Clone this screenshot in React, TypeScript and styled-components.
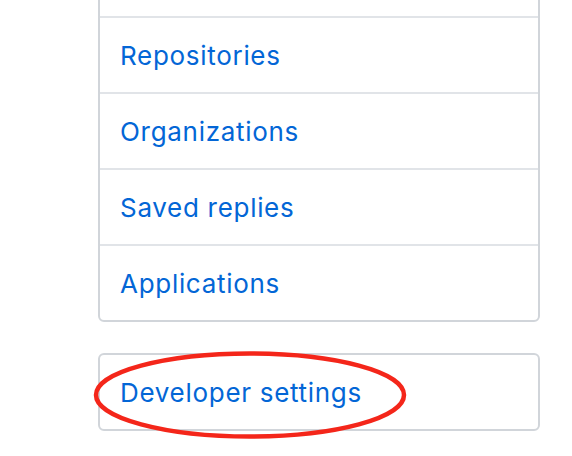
import React from "react";
import styled, { createGlobalStyle } from "styled-components";

const Global = createGlobalStyle`
  html, body { margin: 0; padding: 0; background: #ffffff; }
  body { font-family: Inter, "Liberation Sans", sans-serif; overflow: hidden; }
`;

const Page = styled.div`
  width: 572px;
  height: 456px;
  overflow: hidden;
  padding-left: 98px;
  box-sizing: border-box;
`;

const Panel = styled.nav<{ $offset?: number }>`
  position: relative;
  width: 442px;
  box-sizing: border-box;
  border: 2px solid #d1d5da;
  border-radius: 6px;
  margin-top: ${(p) => p.$offset ?? 0}px;
  display: flex;
  flex-direction: column;
`;

const Row = styled.a`
  display: flex;
  align-items: center;
  height: 74px;
  padding-left: 20px;
  border-top: 2px solid #e1e4e8;
  color: #0366d6;
  font-size: 26px;
  letter-spacing: 0.7px;
  text-decoration: none;
  &:first-child { border-top: none; }
`;

const Ellipse = styled.svg`
  position: absolute;
  left: -6px;
  top: -3px;
  overflow: visible;
  pointer-events: none;
`;

const items = ["", "Repositories", "Organizations", "Saved replies", "Applications"];

export default function App() {
  return (
    <Page>
      <Global />
      <Panel $offset={-60}>
        {items.map((t, i) => (
          <Row key={i} href="#">{t}</Row>
        ))}
      </Panel>
      <Panel $offset={31}>
        <Row href="#">Developer settings</Row>
        <Ellipse width="314" height="88" viewBox="0 0 314 88">
          <ellipse cx="156" cy="43" rx="154" ry="41.5" fill="none" stroke="#f4261a" strokeWidth="4.5" />
        </Ellipse>
      </Panel>
    </Page>
  );
}
